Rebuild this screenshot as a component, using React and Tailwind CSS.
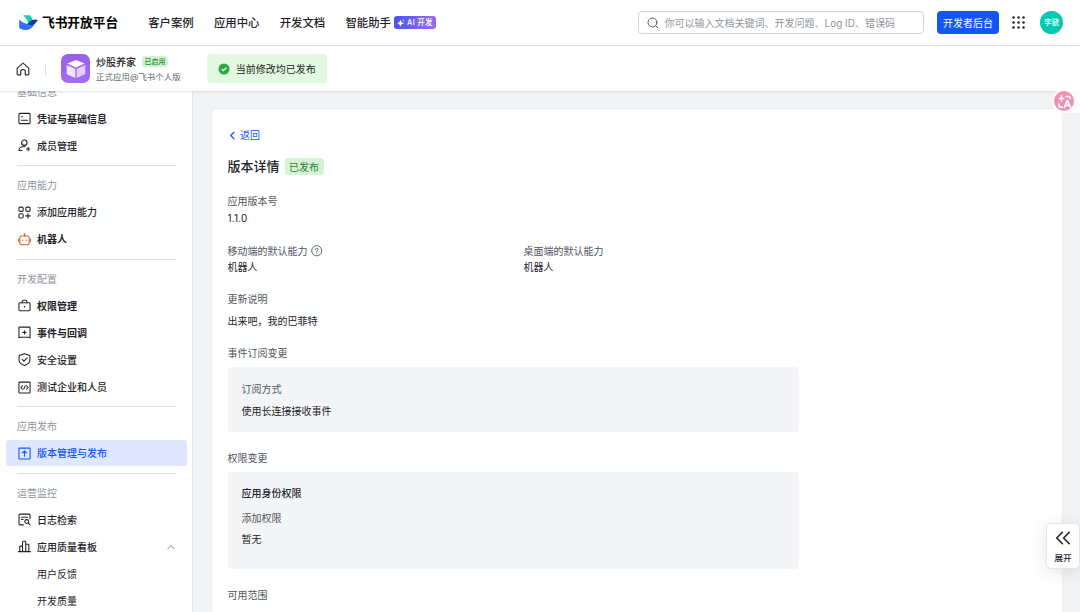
import React, { useState } from 'react';

const Icon = ({ children, className = 'size-[13px]', strokeWidth = 1.15 }) => (
  <svg
    viewBox="0 0 14 14"
    fill="none"
    stroke="currentColor"
    strokeWidth={strokeWidth}
    strokeLinecap="round"
    strokeLinejoin="round"
    className={`shrink-0 ${className}`}
  >
    {children}
  </svg>
);

const icons = {
  credential: (
    <>
      <rect x="1" y="1.5" width="12" height="11" rx="1" />
      <path d="M3.8 5.2h1M3.8 8.8h6.4" />
    </>
  ),
  member: (
    <>
      <circle cx="6.8" cy="4" r="2.9" />
      <path d="M1 12.4c.2-2.6 1.8-3.9 4.2-4h2.6M11 8.8v3.8M9.1 10.7h3.8M1 12.4h3.4" />
    </>
  ),
  apps: (
    <>
      <rect x="1" y="1.2" width="4.6" height="4.6" rx="1.3" />
      <rect x="8.4" y="1.2" width="4.6" height="4.6" rx="1.3" />
      <rect x="1" y="8.3" width="4.6" height="4.6" rx="1.3" />
      <path d="M10.7 8.2v4.8M8.3 10.6h4.8" />
    </>
  ),
  robot: (
    <>
      <rect x="2" y="3.3" width="10" height="9.4" rx="1.6" />
      <path d="M7 3.3V1.2M.6 6.6v2.6M13.4 6.6v2.6M5.2 7.6v.6M8.8 7.6v.6" />
      <circle cx="7" cy="1.2" r=".4" />
    </>
  ),
  permission: (
    <>
      <rect x="1" y="4" width="12" height="8.7" rx="1" />
      <path d="M4.5 4V2.8c0-.9.6-1.5 1.5-1.5h2c.9 0 1.5.6 1.5 1.5V4M7 7.9v.8" />
    </>
  ),
  event: (
    <>
      <path d="M1 12.7V2c0-.5.3-.8.8-.8h10.4c.5 0 .8.3.8.8v10.7l-1.5-.6H2.5z" />
      <path d="M7 5.2v3.4M5.3 6.9h3.4" />
    </>
  ),
  security: (
    <>
      <path d="M7 .8l5.8 1.8v5.2c0 2.7-2.7 4.5-5.8 5.6-3.1-1.1-5.8-2.9-5.8-5.6V2.6z" />
      <path d="M4.5 6.8l1.9 1.9 3.4-3.4" />
    </>
  ),
  test: (
    <>
      <rect x="1" y="1.2" width="12" height="11.8" rx=".8" />
      <path d="M4.7 5.3L3.1 7l1.6 1.7M9.3 5.3L10.9 7 9.3 8.7M7.7 5.2L6.3 8.8" />
    </>
  ),
  publish: (
    <>
      <rect x="1" y="1.2" width="12" height="11.8" rx=".8" />
      <path d="M7 9.9V4.4M4.7 6.5L7 4.3l2.3 2.2" />
    </>
  ),
  log: (
    <>
      <path d="M12.9 6.2V2.4c0-.7-.5-1.2-1.2-1.2H2.3c-.7 0-1.2.5-1.2 1.2v9.2c0 .7.5 1.2 1.2 1.2h3.5M3.8 4.5h6.6M3.8 7h1.8" />
      <circle cx="9.4" cy="9.2" r="2.1" />
      <path d="M11 10.8l2 2" />
    </>
  ),
  chart: (
    <path d="M.6 12.5h12.8M1.9 12.5V7.1c0-.3.2-.5.5-.5h2.4M4.9 12.5V2.3c0-.6.3-.9.9-.9h1.6c.6 0 .9.3.9.9v10.2M8.4 4.5h2.4c.6 0 .9.3.9.9v7.1" />
  ),
};

const menu = [
  {
    title: '基础信息',
    items: [
      { name: '凭证与基础信息', icon: 'credential', bold: true },
      { name: '成员管理', icon: 'member' },
    ],
  },
  {
    title: '应用能力',
    items: [
      { name: '添加应用能力', icon: 'apps' },
      { name: '机器人', icon: 'robot', iconColor: 'text-[#c5692c]', bold: true },
    ],
  },
  {
    title: '开发配置',
    items: [
      { name: '权限管理', icon: 'permission', bold: true },
      { name: '事件与回调', icon: 'event', bold: true },
      { name: '安全设置', icon: 'security' },
      { name: '测试企业和人员', icon: 'test' },
    ],
  },
  {
    title: '应用发布',
    items: [{ name: '版本管理与发布', icon: 'publish' }],
  },
  {
    title: '运营监控',
    items: [
      { name: '日志检索', icon: 'log' },
      { name: '应用质量看板', icon: 'chart', children: ['用户反馈', '开发质量'] },
    ],
  },
];

const navLinks = ['客户案例', '应用中心', '开发文档'];

const Header = () => (
  <header className="flex h-[46px] shrink-0 items-center border-b border-[#dee0e3] bg-white pl-[19px] pr-[17px]">
    <svg viewBox="0 0 19 16" className="h-4 w-[19px] shrink-0">
      <path d="M4.2.2h6.6c1.500 1.300 2.500 3.200 3 5.200-1.600.5-2.700 2-4.300 3.600C8.500 5.800 6.700 2.600 4.200.2z" fill="#12d3b4" />
      <path d="M.2 4.600c3 2.900 6.500 4.700 10.300 4.700 2 0 4.300-.7 5.600-1.700-1.700 4.900-5.200 7.500-9.300 7.500-2.500 0-4.800-.7-6.200-1.800-.3-.2-.4-.5-.4-.9z" fill="#3370ff" />
      <path d="M18.900 5.200c-1.800-.9-4.300-.8-6.200.1-1.900 1-2.800 2.500-4.600 3.700 3.500 1.900 6.900 1.600 8.500-.9.700-1.100 1.300-2 2.300-2.900z" fill="#133c9a" />
    </svg>
    <span className="ml-1 text-[12.7px] font-bold leading-5 text-black">飞书开放平台</span>

    <nav className="ml-[30px] flex items-center gap-[20.2px] text-[11.4px] font-medium leading-5 text-[#1f2329]">
      {navLinks.map((link) => (
        <a key={link}>{link}</a>
      ))}
      <a className="flex items-center">
        智能助手
        <span className="ml-[3px] flex h-[13px] w-[42px] items-center justify-center gap-[2px] rounded-[3px] bg-linear-to-r from-[#4954f2] to-[#9a6af0] text-[7.5px] font-medium leading-3 tracking-[0.3px] text-white">
          <svg viewBox="0 0 8 8" className="size-2" fill="currentColor">
            <path d="M3.500.5C4 3 4.800 3.700 7.300 4.300 4.800 4.900 4 5.600 3.500 8 3 5.600 2.200 4.900-.2 4.300 2.200 3.700 3 3 3.500.5zM6.600 0l.3 1 1 .3-1 .3-.3 1-.3-1-1-.3 1-.3z" />
          </svg>
          AI 开发
        </span>
      </a>
    </nav>

    <div className="ml-auto flex h-[23px] w-[286px] items-center rounded-[4px] border border-[#cfd2d6] pl-2">
      <Icon className="size-3 text-[#51565d]">
        <circle cx="6.4" cy="6.4" r="5.2" />
        <path d="M10.3 10.3L12.6 12.6" />
      </Icon>
      <span className="ml-[5.5px] whitespace-nowrap text-[10px] leading-4 text-[#8f959e]">
        你可以输入文档关键词、开发问题、Log ID、错误码
      </span>
    </div>
    <button className="ml-[13px] flex h-[23px] w-[62px] items-center justify-center rounded-[4px] bg-[#1456f0] text-[10px] leading-4 text-white">
      开发者后台
    </button>
    <svg viewBox="0 0 13 13" className="ml-[13px] size-[13px] shrink-0" fill="#1f2329">
      {[1.5, 6.5, 11.5].map((y) =>
        [1.5, 6.5, 11.5].map((x) => <circle key={`${x}-${y}`} cx={x} cy={y} r="1.25" />)
      )}
    </svg>
    <div className="ml-[15px] flex size-[23px] items-center justify-center rounded-full bg-[#05c8b2] text-[7.5px] font-medium leading-3 text-white">
      李骁
    </div>
  </header>
);

const AppBar = () => (
  <div className="relative z-10 flex h-[45px] shrink-0 items-center bg-white pl-4 shadow-[0_1px_2px_rgba(31,35,41,0.14)]">
    <Icon className="size-[14px] text-[#2b2f36]" strokeWidth={1.2}>
      <path d="M1.2 6.1L7 1.1l5.8 5v6c0 .4-.3.7-.7.7H9.3V9.2c0-.9-.9-1.6-2.3-1.6s-2.3.7-2.3 1.6v3.6H1.9c-.4 0-.7-.3-.7-.7z" />
    </Icon>
    <div className="ml-[15px] h-3 w-px bg-[#dee0e3]" />
    <div className="ml-[15px] flex size-[29px] items-center justify-center rounded-[7px] bg-linear-to-b from-[#9360e6] to-[#a56df5]">
      <svg viewBox="0 0 20 20" className="size-5">
        <path d="M10 .9l8.7 3.7L10 8.5 1.3 4.6z" fill="#fff" />
        <path d="M.7 6l8.6 3.8v9.3L1.4 15.5c-.4-.2-.7-.6-.7-1z" fill="#efe3fd" />
        <path d="M19.3 6l-8.6 3.8v9.3l7.9-3.6c.4-.2.7-.6.7-1z" fill="#e3cffb" />
      </svg>
    </div>
    <div className="ml-[6px] flex flex-col">
      <div className="flex items-center">
        <span className="text-[10px] font-medium leading-4 text-[#1f2329]">炒股养家</span>
        <span className="ml-[6px] flex h-[11px] w-[26px] items-center justify-center rounded-[3px] bg-[#d2f3d3] text-[7px] font-medium leading-3 text-[#2b8a3c]">
          已启用
        </span>
      </div>
      <span className="text-[8.5px] leading-[14px] text-[#646a73]">正式应用@飞书个人版</span>
    </div>
    <div className="ml-[26px] flex h-[29px] w-[120px] items-center rounded-[4px] bg-[#e2f8e1] pl-[11px]">
      <svg viewBox="0 0 12 12" className="size-3">
        <circle cx="6" cy="6" r="5.5" fill="#32a645" />
        <path d="M3.7 6.1l1.7 1.6L8.4 4.7" fill="none" stroke="#fff" strokeWidth="1.2" />
      </svg>
      <span className="ml-[6px] text-[10px] leading-4 text-[#1f2329]">当前修改均已发布</span>
    </div>
  </div>
);

const Sidebar = ({ active, onSelect }) => (
  <aside className="w-[193px] shrink-0 overflow-hidden border-r border-[#e3e5e8] bg-white pl-[6px] text-[10px] leading-4">
    <div className="-mt-[12.8px] w-[180.5px]">
      {menu.map((group, index) => (
        <div key={group.title}>
          {index > 0 && (
            <div className="flex h-[12.2px] items-center px-[11px]">
              <div className="h-px flex-1 bg-[#dee0e3]" />
            </div>
          )}
          <div className="flex h-[27.1px] items-center pl-[11px] text-[#8f959e]">{group.title}</div>
          {group.items.map((item) => (
            <div key={item.name}>
              <div className="flex h-[27.1px] items-center">
                <div
                  onClick={() => onSelect(item.name)}
                  className={`flex h-[26px] flex-1 cursor-pointer items-center rounded-[3px] pl-[11.5px] pr-[11px] ${
                    item.bold ? 'font-bold' : 'font-medium'
                  } ${active === item.name ? 'bg-[#dfe7ff] text-[#1456f0]' : 'text-[#1f2329]'}`}
                >
                  <Icon className={`size-[13px] ${item.iconColor || ''}`}>{icons[item.icon]}</Icon>
                  <span className="ml-[6.5px]">{item.name}</span>
                  {item.children && (
                    <Icon className="ml-auto size-[10px] text-[#646a73]">
                      <path d="M2.5 9.5L7 5l4.5 4.5" />
                    </Icon>
                  )}
                </div>
              </div>
              {item.children?.map((child) => (
                <div key={child} className="flex h-[27.1px] items-center pl-[31px] text-[#1f2329]">
                  {child}
                </div>
              ))}
            </div>
          ))}
        </div>
      ))}
    </div>
  </aside>
);

const VersionDetail = () => (
  <section className="h-[520px] w-[852px] overflow-hidden rounded-t-[6px] border border-[#eaecee] bg-white pl-[15.5px] pt-[18px] text-[10px] leading-4 text-[#1f2329]">
    <a className="flex h-4 items-center text-[#1456f0]">
      <Icon className="size-[9px]" strokeWidth={2}>
        <path d="M9.5 1.8L4.3 7l5.2 5.2" />
      </Icon>
      <span className="ml-[3.5px]">返回</span>
    </a>

    <div className="mt-[14px] flex h-[18px] items-center">
      <h1 className="text-[13px] font-medium leading-[18px]">版本详情</h1>
      <span className="ml-[5px] mt-px flex h-[17px] w-[39px] items-center justify-center rounded-[3px] bg-[#d5f3d5] text-[#2a7f38]">
        已发布
      </span>
    </div>

    <div className="mt-[18px] text-[#51565d]">应用版本号</div>
    <div className="mt-px tracking-[0.2px]">1.1.0</div>

    <div className="mt-[17px] flex">
      <div className="w-[296px]">
        <div className="flex items-center text-[#51565d]">
          移动端的默认能力
          <Icon className="ml-[3px] size-[11.5px]" strokeWidth={1.1}>
            <circle cx="7" cy="7" r="6.2" />
            <path d="M5.3 5.7c0-1 .7-1.7 1.7-1.7s1.7.6 1.7 1.5c0 1.1-1.7 1.2-1.7 2.4M7 9.9v.1" />
          </Icon>
        </div>
        <div>机器人</div>
      </div>
      <div>
        <div className="text-[#51565d]">桌面端的默认能力</div>
        <div>机器人</div>
      </div>
    </div>

    <div className="mt-[16px] text-[#51565d]">更新说明</div>
    <div className="mt-[6px]">出来吧，我的巴菲特</div>

    <div className="mt-[16px] text-[#51565d]">事件订阅变更</div>
    <div className="mt-[6px] h-[65px] w-[571px] rounded-[4px] bg-[#f4f5f7] pl-[14px] pt-[14px]">
      <div className="text-[#51565d]">订阅方式</div>
      <div className="mt-[6px]">使用长连接接收事件</div>
    </div>

    <div className="mt-[18px] text-[#51565d]">权限变更</div>
    <div className="mt-[6px] h-[97px] w-[571px] rounded-[4px] bg-[#f4f5f7] pl-[14px] pt-[13px]">
      <div className="font-medium">应用身份权限</div>
      <div className="mt-[9px] text-[#51565d]">添加权限</div>
      <div className="mt-[5px]">暂无</div>
    </div>

    <div className="mt-[18px] text-[#51565d]">可用范围</div>
    <div className="mt-[6px]">部分成员</div>
  </section>
);

const App = () => {
  const [active, setActive] = useState('版本管理与发布');

  return (
    <div className="relative flex h-[612px] w-[1080px] flex-col overflow-hidden bg-[#f2f4f5] font-['Inter','Noto_Sans_CJK_SC',sans-serif]">
      <Header />
      <AppBar />
      <div className="flex min-h-0 flex-1">
        <Sidebar active={active} onSelect={setActive} />
        <main className="flex-1 overflow-hidden pl-[18px] pt-[17px]">
          <VersionDetail />
        </main>
      </div>

      {/* Floating translate button */}
      <div className="absolute right-0 top-[89px] z-20 flex h-6 w-[28px] items-center rounded-l-full bg-white/80 pl-[2px]">
        <div className="flex size-5 items-center justify-center rounded-full bg-[#ef91b0] text-white">
          <Icon className="size-[15px]" strokeWidth={1.5}>
            <path d="M4.2 1.500c.3 1.800.9 2.400 2.600 2.700-1.700.3-2.300.9-2.600 2.700-.3-1.800-.9-2.400-2.600-2.700 1.700-.3 2.300-.9 2.600-2.700z" fill="currentColor" strokeWidth=".8" />
            <path d="M8.5 2.300h2.300c.8 0 1.300.5 1.300 1.300v.6M1.900 9.300v1.600c0 .8.5 1.300 1.300 1.300h1.600M6.800 12.600l2.900-6.600 2.900 6.600M7.900 10.600h3.600" />
          </Icon>
        </div>
      </div>

      {/* Floating expand panel */}
      <div className="absolute right-0 top-[523px] z-20 flex h-[46px] w-[34px] flex-col items-center rounded-[5px] border border-[#e3e5e8] bg-white pt-[6px] shadow-[0_3px_16px_rgba(31,35,41,0.12)]">
        <Icon className="size-4 text-[#1f2329]" strokeWidth={1.4}>
          <path d="M6.5 2L1.5 7l5 5M12.5 2L7.5 7l5 5" />
        </Icon>
        <span className="mt-[6px] text-[8.5px] font-medium leading-3 text-[#1f2329]">展开</span>
      </div>
    </div>
  );
};

export default App;
